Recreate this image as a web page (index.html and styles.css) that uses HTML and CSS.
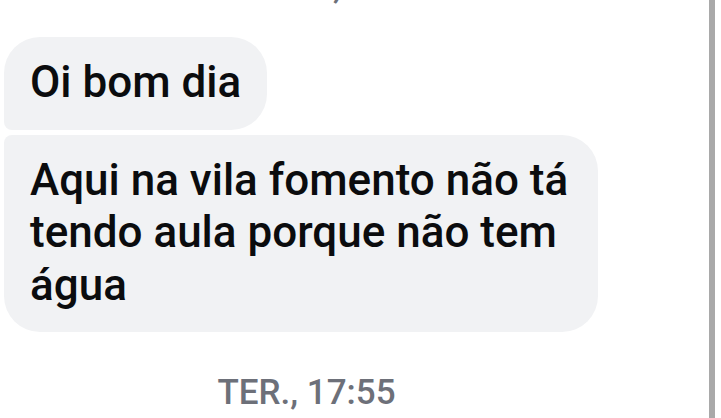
FILE: index.html
```html
<!DOCTYPE html>
<html lang="pt">
<head>
<meta charset="utf-8">
<title>Mensagens</title>
<link rel="stylesheet" href="styles.css">
</head>
<body>
<div class="window">
  <main class="thread">
    <div class="stamp stamp-prev">DOMINGO, 17:55</div>
    <div class="group">
      <div class="bubble first">Oi bom dia</div>
      <div class="bubble last">Aqui na vila fomento não tá<br>tendo aula porque não tem<br>água</div>
    </div>
    <div class="stamp stamp-now">TER., 17:55</div>
  </main>
  <div class="scrollbar"></div>
</div>
</body>
</html>
```
FILE: styles.css
```css
html, body {
  margin: 0;
  padding: 0;
  background: #ffffff;
  overflow: hidden;
}
body {
  width: 721px;
  height: 418px;
  font-family: Roboto, "Liberation Sans", Arial, sans-serif;
}
.window {
  display: flex;
  height: 418px;
}
.thread {
  width: 613px;
  display: flex;
  flex-direction: column;
  align-items: stretch;
}
.stamp {
  text-align: center;
  color: #6d7079;
  font-size: 35px;
  font-weight: 500;
  line-height: 40px;
  height: 40px;
}
.stamp-prev {
  margin-top: -33px;
}
.stamp-now {
  margin-top: 41px;
}
.group {
  margin-top: 30px;
  display: flex;
  flex-direction: column;
  align-items: flex-start;
  gap: 5px;
  padding-left: 4px;
}
.bubble {
  background: #f1f2f4;
  color: #0b0c0e;
  font-size: 44px;
  font-weight: 500;
  line-height: 52.5px;
  padding: 19px 26px 21px 26px;
  border-radius: 36px;
  white-space: nowrap;
}
.bubble.first {
  border-bottom-left-radius: 8px;
}
.bubble.last {
  border-top-left-radius: 8px;
  width: 542px;
}
.scrollbar {
  margin-left: 96px;
  width: 6px;
  height: 418px;
  background: #a9a9a9;
}
```
